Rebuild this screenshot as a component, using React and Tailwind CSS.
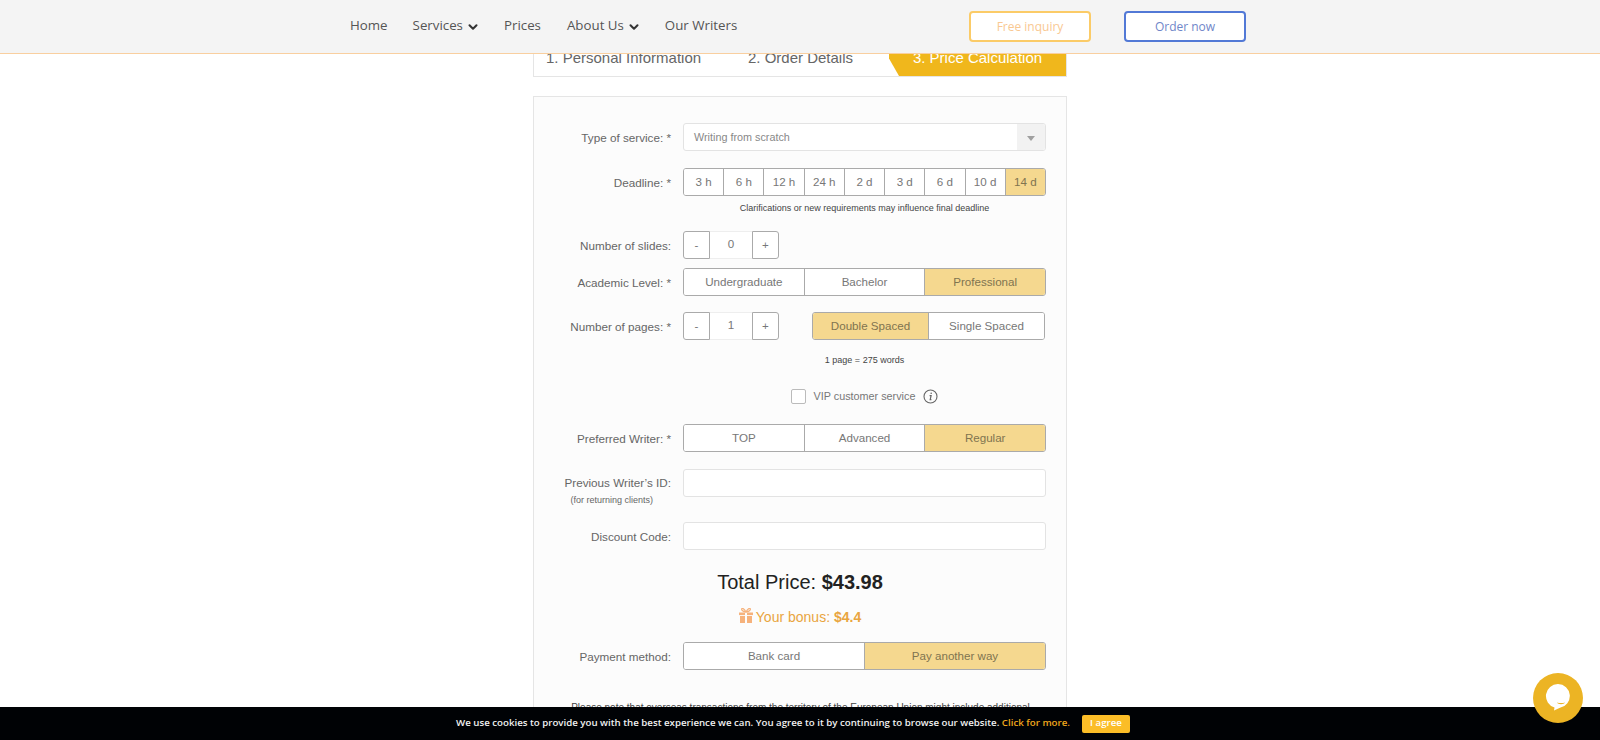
import { ChevronDown } from 'lucide-react';

const deadlines = ['3 h', '6 h', '12 h', '24 h', '2 d', '3 d', '6 d', '10 d', '14 d'];

function Segments({ items, active, className = 'w-full' }) {
  return (
    <div className={`flex h-[28px] overflow-hidden rounded-[3px] border border-[#aaaaaa] ${className}`}>
      {items.map((item, i) => (
        <div
          key={item}
          className={`flex flex-1 items-center justify-center text-[11.6px] ${i > 0 ? 'border-l border-[#aaaaaa]' : ''} ${
            i === active ? 'bg-[#f5d88f] text-[#80744f]' : 'bg-white text-[#777777]'
          }`}
        >
          {item}
        </div>
      ))}
    </div>
  );
}

function Stepper({ value }) {
  return (
    <div className="flex h-[28px] w-[96px] text-[11.6px] text-[#777777]">
      <div className="flex w-[27px] items-center justify-center rounded-l-[3px] border border-[#aaaaaa] bg-white">-</div>
      <div className="flex flex-1 items-center justify-center border-y border-[#eeeeee] bg-white pb-0.5">{value}</div>
      <div className="flex w-[27px] items-center justify-center rounded-r-[3px] border border-[#aaaaaa] bg-white">+</div>
    </div>
  );
}

function Row({ label, sub, className = '', children }) {
  return (
    <div className={`flex items-start gap-3 ${className}`}>
      <div className="flex min-h-[28px] w-[117px] shrink-0 flex-col justify-center pt-px text-right text-[11.7px] text-[#666666]">
        {label}
        {sub && <span className="-mb-3 mt-1 pr-[18px] text-[9px] leading-none">{sub}</span>}
      </div>
      <div className="min-w-0 flex-1">{children}</div>
    </div>
  );
}

function TextField() {
  return <div className="h-[28px] rounded-[3px] border border-[#e3e3e3] bg-white" />;
}

export default function App() {
  return (
    <div className="h-[740px] overflow-hidden bg-white font-['Liberation_Sans',Arial,sans-serif]">
      <header className="fixed inset-x-0 top-0 z-10 flex h-[54px] items-center border-b border-[#f9cf9f] bg-[#f4f4f4] pl-[350px] font-['Open_Sans',sans-serif] text-[13.3px] text-[#555555]">
        <nav className="flex w-[619px] items-center pb-px">
          <a className="mr-[25px]">Home</a>
          <a className="mr-[24px] flex items-center gap-[3px]">
            Services <ChevronDown size={14} strokeWidth={3.5} className="mt-0.5 text-[#333333]" />
          </a>
          <a className="mr-[26px]">Prices</a>
          <a className="mr-[24px] flex items-center gap-[3px]">
            About Us <ChevronDown size={14} strokeWidth={3.5} className="mt-0.5 text-[#333333]" />
          </a>
          <a>Our Writers</a>
        </nav>
        <a className="flex h-[31px] w-[122px] items-center justify-center rounded-[4px] border-2 border-[#fbcb67] bg-white text-xs text-[#f9c892]">
          Free inquiry
        </a>
        <a className="ml-[33px] flex h-[31px] w-[122px] items-center justify-center rounded-[4px] border-2 border-[#5279d6] bg-white text-xs text-[#6f86c9]">
          Order now
        </a>
      </header>

      <main className="mx-auto w-[534px] pt-[40px]">
        <div className="flex h-[37px] items-center overflow-hidden border border-[#e5e5e5] bg-white pl-3 text-[15px] text-[#666666]">
          <span className="w-[202px]">1. Personal Information</span>
          <span className="w-[141px]">2. Order Details</span>
          <span className="flex h-full flex-1 items-center justify-center bg-[#f0b71c] text-white [clip-path:polygon(0_0,100%_0,100%_100%,10px_100%,0_50%)]">
            3. Price Calculation
          </span>
        </div>

        <section className="mt-[19px] border border-[#e5e5e5] bg-[#fcfcfc] px-5 pt-[26px]">
          <Row label="Type of service: *">
            <div className="flex h-[28px] items-center overflow-hidden rounded-[3px] border border-[#e3e3e3] bg-white pl-2.5 text-[10.8px] text-[#888888]">
              <span className="flex-1 pt-px">Writing from scratch</span>
              <span className="flex h-full w-7 items-center justify-center bg-[#f2f2f2]">
                <span className="mt-0.5 border-x-[4px] border-t-[5px] border-x-transparent border-t-[#a0a0a0]" />
              </span>
            </div>
          </Row>

          <Row label="Deadline: *" className="mt-[17px]">
            <Segments items={deadlines} active={8} />
            <p className="mt-[6px] text-center text-[9px] leading-[12px] text-[#444444]">
              Clarifications or new requirements may influence final deadline
            </p>
          </Row>

          <Row label="Number of slides:" className="mt-[17px]">
            <Stepper value="0" />
          </Row>

          <Row label="Academic Level: *" className="mt-[9px]">
            <Segments items={['Undergraduate', 'Bachelor', 'Professional']} active={2} />
          </Row>

          <Row label="Number of pages: *" className="mt-[16px]">
            <div className="flex items-start justify-between">
              <Stepper value="1" />
              <Segments items={['Double Spaced', 'Single Spaced']} active={0} className="mr-px w-[233px]" />
            </div>
            <p className="mt-[14px] text-center text-[9px] leading-[12px] text-[#444444]">1 page = 275 words</p>
            <div className="mt-[22px] flex h-4 items-center justify-center text-[10.8px] text-[#777777]">
              <span className="mr-2 size-[15px] rounded-[2px] border border-[#bbbbbb] bg-white" />
              VIP customer service
              <svg width="15" height="15" viewBox="0 0 15 15" fill="none" stroke="#666666" className="ml-2">
                <circle cx="7.5" cy="7.5" r="6.5" strokeWidth="1.1" />
                <path d="M6.6 6.6h1.5l-.9 4h1.2" strokeWidth="1.2" />
                <circle cx="8.2" cy="4.3" r=".8" fill="#666666" stroke="none" />
              </svg>
            </div>
          </Row>

          <Row label="Preferred Writer: *" className="mt-[20px]">
            <Segments items={['TOP', 'Advanced', 'Regular']} active={2} />
          </Row>

          <Row label="Previous Writer’s ID:" sub="(for returning clients)" className="mt-[17px]">
            <TextField />
          </Row>

          <Row label="Discount Code:" className="mt-[25px]">
            <TextField />
          </Row>

          <div className="mt-[20px] text-center text-xl leading-[24px] text-[#222222]">
            Total Price: <b>$43.98</b>
          </div>
          <div className="mt-[11px] flex items-center justify-center text-sm leading-[24px] text-[#e9a53f]">
            <svg width="14" height="15" viewBox="0 0 14 15" className="mb-1 mr-[3px]" fill="#f6b27c">
              <rect x="0" y="4.5" width="6" height="2.6" />
              <rect x="8" y="4.5" width="6" height="2.6" />
              <rect x="1" y="8" width="5" height="7" />
              <rect x="8" y="8" width="5" height="7" />
              <path d="M7 4C5 .5 3.5 0 2.8 .6 2 1.4 3.5 3.6 7 4zM7 4c2-3.5 3.5-4 4.2-3.4C12 1.4 10.5 3.6 7 4z" fill="none" stroke="#f6b27c" strokeWidth="1.2" />
            </svg>
            <span>
              Your bonus: <b>$4.4</b>
            </span>
          </div>

          <Row label="Payment method:" className="mt-[13px]">
            <Segments items={['Bank card', 'Pay another way']} active={1} />
          </Row>

          <p className="mt-[31px] pl-px text-center text-[10px] leading-[14px] text-[#444444]">
            Please note that overseas transactions from the territory of the European Union might include additional
          </p>
        </section>
      </main>

      <div className="fixed inset-x-0 bottom-0 z-10 flex h-[33px] items-center justify-center gap-3 bg-[#000205] pr-[14px] font-['Open_Sans',sans-serif] text-[9.7px] font-semibold text-[#f1f1f1]">
        <span>
          We use cookies to provide you with the best experience we can. You agree to it by continuing to browse our
          website. <span className="text-[#f0a81c]">Click for more.</span>
        </span>
        <span className="flex h-[18px] w-[48px] items-center justify-center rounded-[2px] bg-[#fbbd27] text-white">I agree</span>
      </div>

      <button className="fixed bottom-[17px] right-[17px] z-20 flex size-[50px] items-center justify-center rounded-full bg-[#ecb424]">
        <svg width="26" height="28" viewBox="0 0 26 28">
          <path d="M13 0a12 12 0 0 1 2 23.8L9 26.5l.5-3A12 12 0 0 1 13 0z" fill="#fff" />
          <path d="M12 18.5c2.5.8 5.5.8 8 0c-1 2.2-7 2.2-8 0z" fill="#ecb424" />
        </svg>
      </button>
    </div>
  );
}
